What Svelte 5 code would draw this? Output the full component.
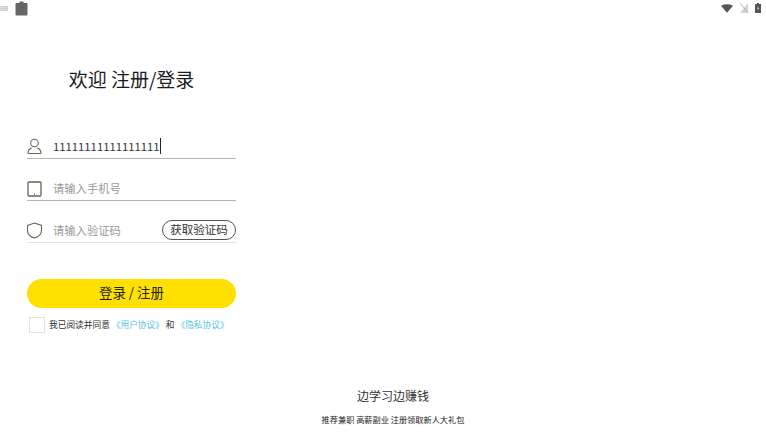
<script>
  let value = '11111111111111111';
</script>

<div class="screen">
  <header class="status">
    <div class="status-group">
      <svg class="kbd" width="9" height="7" viewBox="0 0 9 7"><rect x="0" y="1" width="9" height="5" fill="#ccc"/><path d="M1 2.500h7M1 4.500h7" stroke="#fff" stroke-width=".6" stroke-dasharray="1 .6"/></svg>
      <svg width="13" height="15" viewBox="0 0 13 15"><path d="M1 2h3.500V.6h4V2H12a1 1 0 0 1 .5 1v10.500a1 1 0 0 1-1 1h-10a1 1 0 0 1-1-1V3a1 1 0 0 1 .5-1z" fill="#666"/></svg>
    </div>
    <div class="status-group right">
      <svg width="12" height="9" viewBox="0 0 13 9"><path d="M0 1.500Q6.500-1.500 13 1.500L6.500 9z" fill="#555"/></svg>
      <svg width="8" height="10" viewBox="0 0 8 10"><path d="M8 0v10H0z" fill="#d4d4d4"/><path d="M0 0l8 10" stroke="#aaa" stroke-width=".8"/></svg>
      <svg width="6" height="10" viewBox="0 0 6 10"><path d="M2 0h2v1h2v9H0V1h2z" fill="#555"/><path d="M3.500 2.500L2 5.500h1.300L2.500 8 4 5H2.800z" fill="#fff"/></svg>
    </div>
  </header>

  <main class="form">
    <h1>欢迎 注册/登录</h1>

    <div class="field first">
      <svg class="icon" width="16" height="17" viewBox="0 0 16 17" fill="none" stroke="#6b6450" stroke-width="1.100"><circle cx="7.500" cy="5" r="3.800"/><path d="M1 15.500c0-3 2-5 3.800-5.500M14 15.500c0-3-2-5-3.800-5.500M1 15.500h13"/></svg>
      <span class="value">{value}<i class="caret"></i></span>
    </div>

    <div class="field">
      <svg class="icon" width="16" height="16" viewBox="0 0 16 16" fill="none" stroke="#6b6450" stroke-width="1.300"><rect x="1" y="1" width="13" height="14" rx="1"/><path d="M7 13h1"/></svg>
      <span class="hint">请输入手机号</span>
    </div>

    <div class="field light">
      <svg class="icon" width="16" height="17" viewBox="0 0 16 17" fill="none" stroke="#6b6450" stroke-width="1.100"><path d="M7.500 1l7 2.500v5c0 4-3.500 6.500-7 7.500-3.500-1-7-3.500-7-7.500v-5z"/></svg>
      <span class="hint">请输入验证码</span>
      <button class="code" type="button">获取验证码</button>
    </div>

    <button class="submit" type="button">登录 / 注册</button>

    <div class="agree">
      <span class="box"></span>
      <span class="agree-text">我已阅读并同意 <a href="#a">《用户协议》</a> 和 <a href="#b">《隐私协议》</a></span>
    </div>
  </main>

  <footer class="foot">
    <div class="slogan">边学习边赚钱</div>
    <div class="sub">推荐兼职 高薪副业 注册领取新人大礼包</div>
  </footer>
</div>

<style>
  :global(body) {
    margin: 0;
    background: #fff;
  }
  .screen {
    width: 766px;
    height: 434px;
    position: relative;
    overflow: hidden;
    background: #fff;
    font-family: "Noto Sans CJK SC", "Noto Sans", sans-serif;
    color: #222;
    display: flex;
    flex-direction: column;
  }
  .status {
    height: 17px;
    padding: 1px 5px 0 0;
    display: flex;
    justify-content: space-between;
    align-items: flex-start;
    box-sizing: border-box;
  }
  .status-group {
    display: flex;
    align-items: center;
    gap: 7px;
  }
  .kbd {
    margin-left: -1px;
  }
  .right {
    gap: 7px;
    padding: 2px 0 0 0;
  }
  .form {
    width: 209px;
    margin-left: 27px;
    display: flex;
    flex-direction: column;
  }
  h1 {
    margin: 48px 0 0;
    font-size: 19px;
    font-weight: 400;
    line-height: 28px;
    text-align: center;
    color: #1c1c1c;
    height: 28px;
  }
  .field {
    height: 42px;
    border-bottom: 1px solid #b5b5b5;
    display: flex;
    align-items: flex-end;
    padding-bottom: 3px;
    box-sizing: border-box;
    position: relative;
  }
  .field.first {
    margin-top: 24px;
  }
  .field.light {
    border-bottom-color: #e2e2e2;
  }
  .icon {
    width: 16px;
    flex: none;
  }
  .value {
    margin-left: 10px;
    font-size: 11.300px;
    line-height: 18px;
    color: #333;
    display: inline-flex;
    align-items: center;
  }
  .caret {
    display: inline-block;
    width: 1px;
    height: 16px;
    background: #222;
  }
  .hint {
    margin-left: 10px;
    font-size: 11.300px;
    line-height: 18px;
    color: #999;
  }
  .code {
    position: absolute;
    right: 0;
    bottom: 2px;
    width: 74px;
    height: 20px;
    border: 1px solid #555;
    border-radius: 10px;
    background: #fff;
    padding: 0 0 2px;
    font: inherit;
    font-size: 11.500px;
    line-height: 16px;
    color: #333;
  }
  .submit {
    margin-top: 36px;
    height: 29px;
    border: 0;
    border-radius: 15px;
    background: #ffe000;
    padding: 0 0 3px;
    font: inherit;
    font-size: 13.400px;
    color: #222;
  }
  .agree {
    margin-top: 9px;
    padding-left: 2px;
    display: flex;
    align-items: center;
    gap: 4px;
  }
  .box {
    width: 14px;
    height: 14px;
    border: 1px solid #e2e2e2;
    flex: none;
  }
  .agree-text {
    font-size: 8.700px;
    line-height: 14px;
    color: #333;
    white-space: nowrap;
  }
  .agree-text a {
    color: #5cc3dc;
    text-decoration: none;
  }
  .foot {
    position: absolute;
    left: 0;
    right: 0;
    top: 387px;
    text-align: center;
  }
  .slogan {
    font-size: 12px;
    line-height: 18px;
    color: #333;
    padding-left: 20px;
  }
  .sub {
    margin-top: 8px;
    font-size: 8.200px;
    line-height: 12px;
    color: #222;
    padding-left: 20px;
  }
</style>
